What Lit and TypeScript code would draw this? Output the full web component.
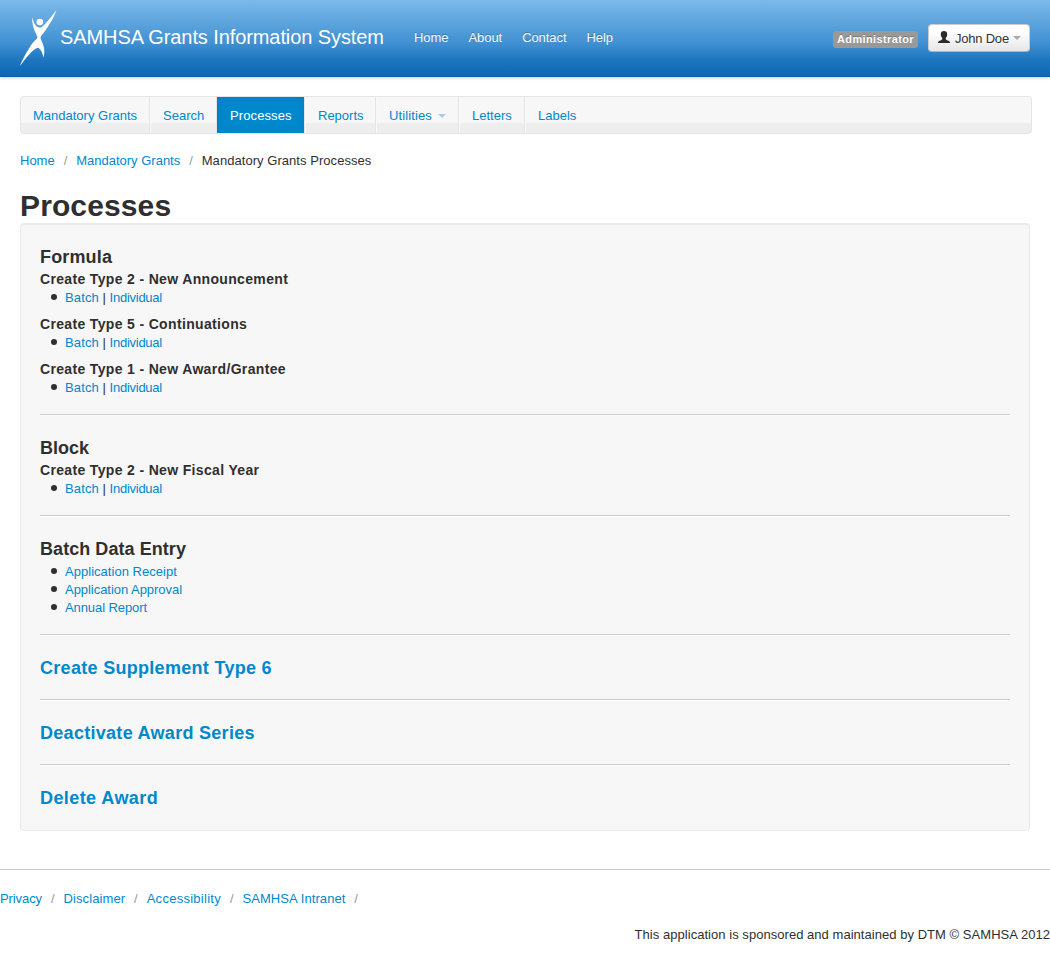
import { LitElement, html, css, nothing } from "lit";
import { customElement } from "lit/decorators.js";
import { classMap } from "lit/directives/class-map.js";
import { styleMap } from "lit/directives/style-map.js";

interface Tab { label: string; width?: number; active?: boolean; menu?: boolean; }
interface Link { text: string; track?: number; }
interface Group { title?: string; rows: Link[][]; }
interface Section { title: string; track?: number; link?: boolean; groups: Group[]; }

const TABS: Tab[] = [
  { label: "Mandatory Grants", width: 129 },
  { label: "Search", width: 67 },
  { label: "Processes", width: 88, active: true },
  { label: "Reports", width: 71 },
  { label: "Utilities", width: 83, menu: true },
  { label: "Letters", width: 66 },
  { label: "Labels" },
];

const PAIR: Link[][] = [[{ text: "Batch", track: 0.15 }, { text: "Individual", track: -0.26 }]];

const SECTIONS: Section[] = [
  {
    title: "Formula", track: 0.15,
    groups: [
      { title: "Create Type 2 - New Announcement", rows: PAIR },
      { title: "Create Type 5 - Continuations", rows: PAIR },
      { title: "Create Type 1 - New Award/Grantee", rows: PAIR },
    ],
  },
  { title: "Block", groups: [{ title: "Create Type 2 - New Fiscal Year", rows: PAIR }] },
  {
    title: "Batch Data Entry", track: 0.06,
    groups: [{ rows: [
      [{ text: "Application Receipt", track: 0.03 }],
      [{ text: "Application Approval", track: -0.04 }],
      [{ text: "Annual Report", track: -0.09 }],
    ] }],
  },
  { title: "Create Supplement Type 6", track: 0.3, link: true, groups: [] },
  { title: "Deactivate Award Series", track: 0.29, link: true, groups: [] },
  { title: "Delete Award", track: 0.42, link: true, groups: [] },
];

const FOOTER_LINKS: Link[] = [
  { text: "Privacy", track: -0.09 },
  { text: "Disclaimer", track: 0.1 },
  { text: "Accessibility", track: 0.27 },
  { text: "SAMHSA Intranet", track: 0.07 },
];

const tracking = (v = 0) => styleMap({ letterSpacing: `${v}px` });

const base = css`
  :host { display: block; }
  * { box-sizing: border-box; }
  a { color: #0088cc; text-decoration: none; cursor: pointer; }
  ul { margin: 0; padding: 0; list-style: none; }
`;

@customElement("site-header")
class SiteHeader extends LitElement {
  static styles = [base, css`
    .bar {
      display: flex; align-items: center; height: 77px; padding: 0 20px;
      background: linear-gradient(#7cb9ea 0, #5ba3dc 24px, #3f8fd2 44px, #1d76bf 60px, #0d67b3 76px);
      border-bottom: 1px solid #0a5ea6;
      box-shadow: 0 1px 3px rgba(0, 0, 0, .2);
    }
    .logo { display: block; width: 37px; height: 56px; flex: none; }
    .brand {
      width: 357px; padding: 0 0 2px 3px; font-size: 20px; line-height: 24px; color: #fff;
      white-space: nowrap; letter-spacing: -.09px;
    }
    .links { display: flex; gap: 20px; padding-bottom: 1px; letter-spacing: -.06px; }
    .links a { color: #fff; opacity: .95; text-shadow: 0 -1px 0 rgba(0, 0, 0, .25); }
    .badge {
      margin-left: auto; margin-right: 10px; width: 85px; height: 17px; padding: 1px 0 0; margin-top: 2px;
      border-radius: 3px; background: #999; color: #fff; text-align: center;
      font-size: 11px; font-weight: bold; line-height: 15px; letter-spacing: .38px;
      text-shadow: 0 -1px 0 rgba(0, 0, 0, .25);
    }
    .user {
      display: flex; align-items: center; width: 102px; height: 28px; padding: 0 8px 0 9px;
      border: 1px solid #ccc; border-bottom-color: #b3b3b3; border-radius: 4px;
      background: linear-gradient(#fff, #fff 25%, #e6e6e6); font: inherit; color: #333;
      text-shadow: 0 1px 1px rgba(255, 255, 255, .75);
    }
    .person { width: 12px; height: 12px; margin-right: 5px; margin-top: -2px; flex: none; }
    .name { white-space: nowrap; letter-spacing: -.22px; padding-top: 2px; }
    .caret {
      margin-left: auto; border: 4px solid transparent; border-top-color: #aaa; border-bottom: 0;
    }
  `];
  render() {
    return html`
      <header class="bar">
        <svg class="logo" viewBox="0 0 37 56" fill="#fff">
          <circle cx="19.800" cy="12" r="3.300" />
          <path d="M12.300 7.300C13.200 11 14.500 15 17 16.800C18.500 17.800 20.500 17.800 22 17C26.500 13 31.500 6.500 36.500 0C34.500 5.500 32.500 9.500 30 13.300C27 18.500 24.500 22 21.500 25.500C20.300 27 20.300 28 21 29.500C22.800 33.500 24.300 37 24.300 41C24.300 43.500 24 45.500 23.600 47.800C22.500 43.500 20.800 38.200 17.600 37.800C13.500 38.500 6.500 47.500 0 55.900C1.500 51.500 6 43 10 36.700C12 33.500 14 31.500 16.500 29C17.500 28 17.600 27 16.800 25.500C14.500 20.500 11.700 14.500 12.300 7.300Z" />
        </svg>
        <div class="brand">SAMHSA Grants Information System</div>
        <nav class="links">
          ${["Home", "About", "Contact", "Help"].map((t) => html`<a>${t}</a>`)}
        </nav>
        <span class="badge">Administrator</span>
        <button class="user">
          <svg class="person" viewBox="0 0 12 12" fill="#2b2b2b">
            <path d="M6 0C8 0 9.200 1.200 9.200 3.200C9.200 5 8.600 6.200 7.700 7C7.600 8.200 7.800 8.700 9 9.200C11 9.900 12 10.400 12 12H0C0 10.400 1 9.900 3 9.200C4.200 8.700 4.400 8.200 4.300 7C3.400 6.200 2.800 5 2.800 3.200C2.800 1.200 4 0 6 0Z" />
          </svg>
          <span class="name">John Doe</span>
          <span class="caret"></span>
        </button>
      </header>`;
  }
}

@customElement("tab-bar")
class TabBar extends LitElement {
  static styles = [base, css`
    .tabs {
      display: flex; height: 38px; border: 1px solid #e5e5e5; border-radius: 4px; overflow: hidden;
      background: linear-gradient(#f7f7f7 26px, #eee 26px);
    }
    .tab {
      display: flex; align-items: center; padding: 1px 0 0 12px; white-space: nowrap; flex: none;
      border-left: 1px solid #f9f9f9; border-right: 1px solid #e5e5e5; color: #0088cc;
    }
    .tab:first-child { border-left: 0; }
    .tab:last-child { border-right: 0; }
    .active {
      background: #0088cc; color: #fff; border-left-color: #0082c8; letter-spacing: .1px;
      box-shadow: inset 0 0 5px 2px rgba(0, 118, 195, .35);
    }
    .caret {
      margin-left: 6px; margin-top: 1px; border: 4px solid transparent; border-top-color: #a3d0e6; border-bottom: 0;
    }
    .menu { letter-spacing: .12px; }
  `];
  render() {
    return html`<nav class="tabs">
      ${TABS.map((t) => html`<a
        class=${classMap({ tab: true, active: !!t.active, menu: !!t.menu })}
        style=${styleMap(t.width ? { width: `${t.width}px` } : {})}
      >${t.label}${t.menu ? html`<span class="caret"></span>` : nothing}</a>`)}
    </nav>`;
  }
}

@customElement("process-list")
class ProcessList extends LitElement {
  static styles = [base, css`
    .well {
      padding: 19px; background: #f7f7f7; border: 1px solid #eaeaea; border-radius: 4px;
      box-shadow: inset 0 1px 1px rgba(0, 0, 0, .05);
    }
    .section + .section {
      margin-top: 18px; padding-top: 19px; border-top: 1px solid #ccc; box-shadow: inset 0 1px #fff;
    }
    h3 { margin: 0; padding-top: 2px; font-size: 18px; line-height: 25px; }
    h4 { margin: 0; font-size: 14px; line-height: 18px; letter-spacing: .34px; }
    .group + .group { margin-top: 9px; }
    .rows { margin-left: 25px; }
    .row { padding-top: 2px; line-height: 16px; height: 18px; }
    .row::before {
      content: ""; display: inline-block; width: 6px; height: 6px; margin: 0 8px 0 -14px;
      border-radius: 50%; background: #2f2f2f; vertical-align: 2px;
    }
  `];
  render() {
    return html`<div class="well">
      ${SECTIONS.map((s) => html`<section class="section">
        <h3 style=${tracking(s.track)}>${s.link ? html`<a>${s.title}</a>` : s.title}</h3>
        ${s.groups.map((g) => html`<div class="group">
          ${g.title ? html`<h4>${g.title}</h4>` : nothing}
          <ul class="rows">
            ${g.rows.map((r) => html`<li class="row">${r.map((l, i) => html`${i ? " | " : ""}<a style=${tracking(l.track)}>${l.text}</a>`)}</li>`)}
          </ul>
        </div>`)}
      </section>`)}
    </div>`;
  }
}

@customElement("app-root")
class AppRoot extends LitElement {
  static styles = [base, css`
    :host {
      min-height: 965px; background: #fff; color: #2f2f2f;
      font: 13px/18px "Liberation Sans", Arial, sans-serif;
    }
    .page { padding: 19px 20px 0; }
    .tabbar { margin-right: -2px; }
    .trail { display: flex; white-space: pre; }
    .crumbs { margin: 18px 0 17px; }
    .here { letter-spacing: .05px; }
    .divider { width: 21.500px; text-align: center; color: #999; }
    h1 { margin: 0; padding-top: 2px; font-size: 30px; line-height: 34px; letter-spacing: .12px; }
    .footer { margin-top: 38px; padding-top: 20px; border-top: 1px solid #ccc; }
    .credit { margin: 18px 0 0; text-align: right; white-space: nowrap; letter-spacing: .04px; }
  `];
  render() {
    const slash = html`<span class="divider">/</span>`;
    return html`
      <site-header></site-header>
      <main class="page">
        <tab-bar class="tabbar"></tab-bar>
        <div class="trail crumbs"><a>Home</a>${slash}<a>Mandatory Grants</a>${slash}<span class="here">Mandatory Grants Processes</span></div>
        <h1>Processes</h1>
        <process-list></process-list>
      </main>
      <footer class="footer">
        <div class="trail">${FOOTER_LINKS.map((l) => html`<a style=${tracking(l.track)}>${l.text}</a>${slash}`)}</div>
        <p class="credit">This application is sponsored and maintained by DTM © SAMHSA 2012</p>
      </footer>`;
  }
}
